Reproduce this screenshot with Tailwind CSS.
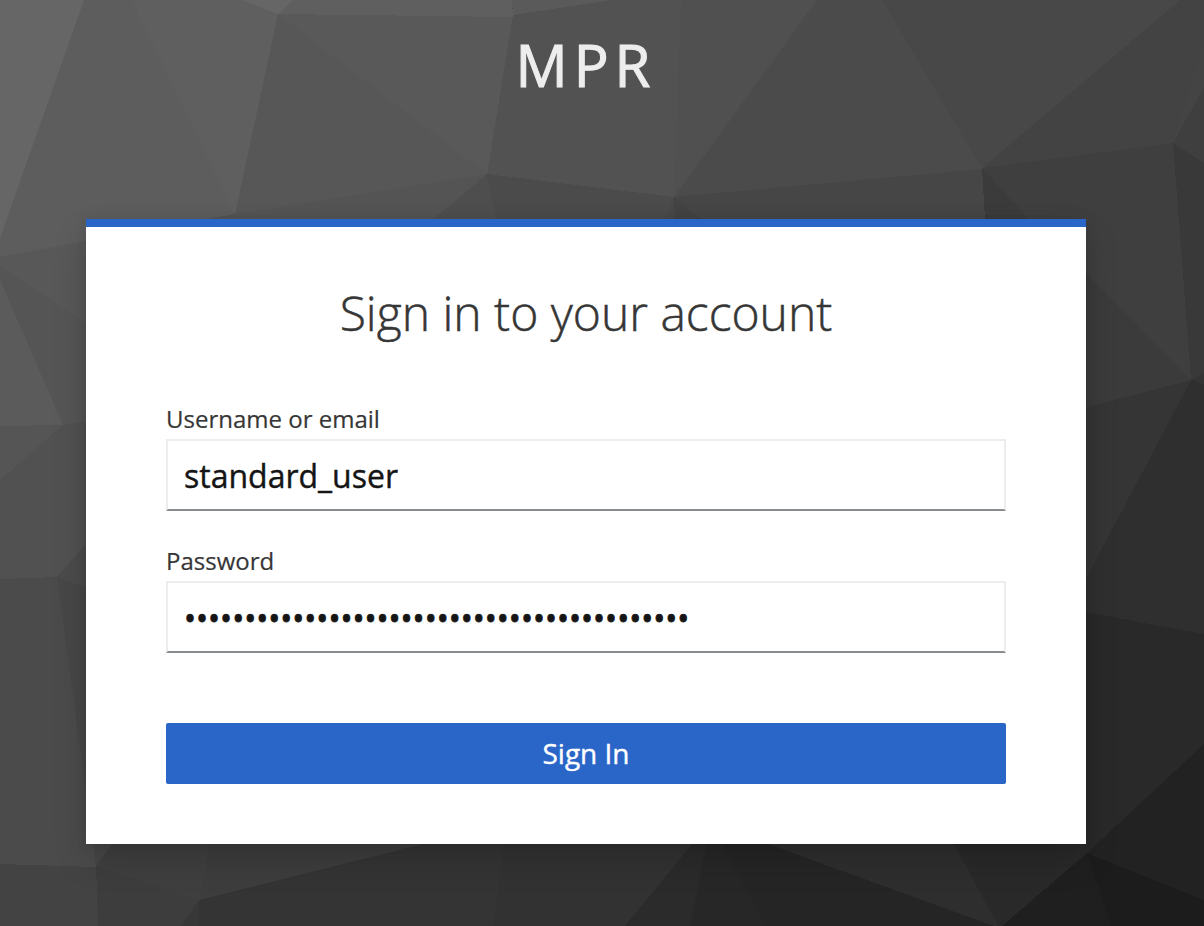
<!DOCTYPE html>
<html lang="en">
<head>
<meta charset="utf-8">
<title>Sign in to MPR</title>
<script src="https://cdn.jsdelivr.net/npm/@tailwindcss/browser@4"></script>
</head>
<body class="relative h-[926px] w-[1204px] overflow-hidden bg-[#484848] font-['Open_Sans',sans-serif] text-[#363636]">
<!-- low-poly backdrop -->
<svg class="absolute inset-0 -z-10 h-full w-full" viewBox="0 0 1204 926" aria-hidden="true">
<rect width="1204" height="926" fill="#484848"/>
<g class="blur-[0.6px]" shape-rendering="crispEdges">
<polygon points="0,0 84,0 0,238" fill="#666666"/>
<polygon points="84,0 132,0 235,214 0,257 0,238" fill="#5d5d5d"/>
<polygon points="132,0 242,0 278,14 235,214" fill="#5f5f5f"/>
<polygon points="242,0 293,0 278,14" fill="#666666"/>
<polygon points="293,0 512,0 513,17 278,14" fill="#5f5f5f"/>
<polygon points="278,14 487,174 235,214" fill="#575757"/>
<polygon points="278,14 513,17 487,174" fill="#595959"/>
<polygon points="512,0 612,0 513,15" fill="#5a5a5a"/>
<polygon points="513,15 612,0 681,0 674,197 487,174" fill="#525252"/>
<polygon points="681,0 817,0 674,197" fill="#505050"/>
<polygon points="817,0 882,0 982,169 674,197" fill="#4b4b4b"/>
<polygon points="882,0 1180,0 982,168" fill="#484848"/>
<polygon points="1180,0 1204,0 1204,43 1173,143 982,168" fill="#434343"/>
<polygon points="1204,43 1204,87 1173,143" fill="#444444"/>
<polygon points="1204,87 1204,163 1173,143" fill="#3f3f3f"/>
<polygon points="982,168 1173,143 1191,380 1087,274 1029,219" fill="#3f3f3f"/>
<polygon points="1173,143 1204,163 1204,373 1191,380" fill="#393939"/>
<polygon points="1191,380 1204,373 1204,384" fill="#343434"/>
<polygon points="982,168 1029,219 1087,274 1191,380 1080,412 985,219" fill="#3b3b3b"/>
<polygon points="1191,380 1080,409 1080,590" fill="#353535"/>
<polygon points="1191,380 1204,384 1204,634 1080,611 1080,590" fill="#2f2f2f"/>
<polygon points="1080,611 1204,634 1204,744 1087,853 1080,853" fill="#292929"/>
<polygon points="1204,744 1204,900 1087,853" fill="#222222"/>
<polygon points="1087,853 1204,900 1204,926 1111,926" fill="#1c1c1c"/>
<polygon points="1087,853 1111,926 1002,926" fill="#1f1f1f"/>
<polygon points="1087,853 1002,926 998,926 954,844 940,810 1086,810" fill="#292929"/>
<polygon points="954,844 998,926 994,926 768,844" fill="#2e2e2e"/>
<polygon points="722,844 768,844 994,926 765,926" fill="#252525"/>
<polygon points="706,844 722,844 765,926 690,926" fill="#272727"/>
<polygon points="692,844 706,844 690,926 625,926" fill="#2b2b2b"/>
<polygon points="504,844 692,844 625,926 493,926" fill="#323232"/>
<polygon points="423,844 504,844 493,926 199,926 199,900" fill="#343434"/>
<polygon points="210,844 423,844 199,900" fill="#3d3d3d"/>
<polygon points="112,844 210,844 199,900 96,866" fill="#3f3f3f"/>
<polygon points="93,844 112,844 96,866" fill="#464646"/>
<polygon points="96,866 199,900 181,926 98,926" fill="#3d3d3d"/>
<polygon points="199,900 199,926 181,926" fill="#373737"/>
<polygon points="0,864 96,867 98,926 0,926" fill="#434343"/>
<polygon points="0,579 57,577 93,844 96,867 0,864" fill="#4b4b4b"/>
<polygon points="57,577 120,595 93,844" fill="#474747"/>
<polygon points="57,577 90,539 90,589" fill="#4b4b4b"/>
<polygon points="0,480 63,425 90,420 90,539 57,577 0,579" fill="#515151"/>
<polygon points="0,426 63,425 0,480" fill="#555555"/>
<polygon points="0,280 63,425 0,426" fill="#5b5b5b"/>
<polygon points="0,266 90,326 90,420 63,425 0,280" fill="#555555"/>
<polygon points="0,257 90,240 90,326 0,266" fill="#585858"/>
<polygon points="235,214 487,174 433,222 190,222" fill="#545454"/>
<polygon points="487,174 496,222 430,222" fill="#4e4e4e"/>
<polygon points="487,174 674,197 664,222 496,222" fill="#4b4b4b"/>
<polygon points="674,197 675,222 664,222" fill="#484848"/>
<polygon points="674,197 982,169 985,222 704,222" fill="#464646"/>
<polygon points="674,197 704,222 675,222" fill="#434343"/>
</g>
</svg>

<div class="ml-[86px] flex w-[1000px] flex-col">
  <header class="h-[219px] pt-[25px] text-center text-[58px] leading-[79px] tracking-[6px] whitespace-nowrap text-[#ededed] uppercase [-webkit-text-stroke:1.1px_#ededed]">MPR</header>
  <main class="flex h-[625px] flex-col border-t-8 border-[#2a65c8] bg-white px-20 shadow-[0_16px_32px_0_rgba(3,3,3,0.16),0_0_12px_0_rgba(3,3,3,0.08)]">
    <h1 class="mt-[53px] text-center text-5xl leading-[66px] font-light [-webkit-text-stroke:0.5px_#363636]">Sign in to your account</h1>
    <form class="mt-[55px] flex flex-col">
      <label for="username" class="-mt-px mb-px text-2xl leading-[38px] [-webkit-text-stroke:0.2px_#363636]">Username or email</label>
      <input id="username" type="text" value="standard_user" class="h-[72px] border-2 border-[#ededed] border-b-[#8a8d90] bg-white px-4 text-[32px] text-[#151515] [-webkit-text-stroke:0.4px_#151515]">
      <label for="password" class="mt-[31px] mb-px text-2xl leading-[38px] [-webkit-text-stroke:0.2px_#363636]">Password</label>
      <input id="password" type="password" value="012345678901234567890123456789012345678901" class="h-[72px] border-2 border-[#ededed] border-b-[#8a8d90] bg-white px-4 text-[32px] text-[#151515] [-webkit-text-stroke:0.8px_#151515]">
      <button type="button" class="mt-[70px] h-[61px] rounded-[2px] bg-[#2a65c8] pb-[2px] text-[28px] leading-[42px] text-white [-webkit-text-stroke:0.4px_#fff]">Sign In</button>
    </form>
  </main>
</div>
</body>
</html>
